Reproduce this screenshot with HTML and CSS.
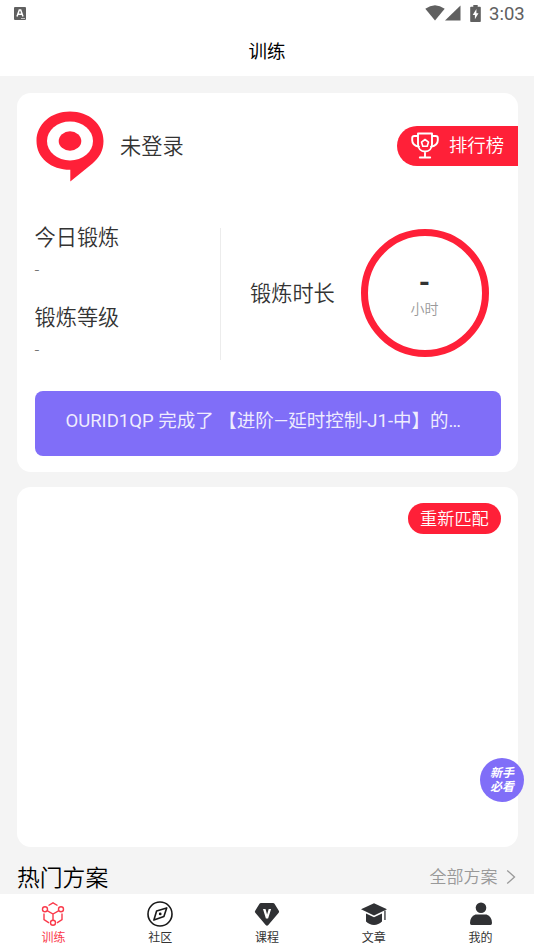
FILE: index.html
```html
<!DOCTYPE html>
<html lang="zh-CN">
<head>
<meta charset="utf-8">
<meta name="viewport" content="width=device-width">
<title>训练</title>
<link rel="stylesheet" href="styles.css">
</head>
<body>
<div class="app">
  <div class="status">
    <svg class="status-app" viewBox="0 0 12 13"><rect width="12" height="13" rx="1" fill="#606060"/><path d="M3 9.500 5.300 3h1.400L9 9.500M4 7.300h4" fill="none" stroke="#fff" stroke-width="1.500"/><path d="M7 11.500h4" stroke="#ddd" stroke-width=".8"/></svg>
    <div class="status-right">
      <svg width="20" height="16" viewBox="0 0 20 16"><path d="M.3 3.700Q10-3.400 19.700 3.700L10 15.500Z"/></svg>
      <svg width="16" height="16" viewBox="0 0 16 16"><path d="M15.500.5v15H0Z"/></svg>
      <svg class="battery" width="11" height="17" viewBox="0 0 11 17"><path d="M3.300 0h4.400v1.800H10q.8 0 .8.8v13.600q0 .8-.8.8H1q-.8 0-.8-.8V2.600q0-.8.8-.8h2.300Z"/><path d="M6.400 4 2.700 10h2.200v4.300L8.500 8.200H6.400Z" fill="#fff"/></svg>
      <span class="clock">3:03</span>
    </div>
  </div>
  <header class="title">训练</header>
  <main class="content">
    <section class="card summary">
      <div class="profile">
        <svg class="avatar" viewBox="0 0 68 71"><path d="M34 .5C53 .5 67.500 13 67.500 30c0 10-4.500 17-11 22.500L34.300 70.500V58.800C15 58.800.5 47 .5 30S15 .5 34 .5Z" fill="#ff2038"/><ellipse cx="34" cy="30" rx="23" ry="19.500" fill="#fff"/><ellipse cx="34" cy="30" rx="11.300" ry="9.700" fill="#ff2038"/></svg>
        <span class="name">未登录</span>
        <div class="rank">
          <svg width="28" height="27" viewBox="0 0 28 27" fill="none" stroke="#fff" stroke-width="1.900" stroke-linecap="round" stroke-linejoin="round"><path d="M7 1.500h14v10.500c0 4.500-2.800 7.500-7 7.500s-7-3-7-7.500ZM7 4H3.300Q1.200 4 1.200 6v2.300q0 5.200 6.800 6.500M21 4h3.700q2.100 0 2.100 2v2.300q0 5.200-6.800 6.500M14 20v5M8.800 25.500h10.400"/><path d="m14 7.500 3.500 2.600-1.300 4.200h-4.400l-1.300-4.200Z" stroke-width="1.600"/></svg>
          <span>排行榜</span>
        </div>
      </div>
      <div class="stats">
        <div class="stat-list">
          <div class="stat"><div class="stat-label">今日锻炼</div><div class="stat-value">-</div></div>
          <div class="stat"><div class="stat-label">锻炼等级</div><div class="stat-value">-</div></div>
        </div>
        <div class="duration">
          <span class="stat-label">锻炼时长</span>
          <div class="ring"><b>-</b><span>小时</span></div>
        </div>
      </div>
      <div class="notice">OURID1QP 完成了 【进阶—延时控制-J1-中】的…</div>
    </section>
    <section class="card match"><button class="rematch">重新匹配</button></section>
    <div class="section-head">
      <h2>热门方案</h2>
      <div class="more">全部方案<svg width="10" height="16" viewBox="0 0 10 16"><path d="m1.200 1.500 7.300 6.500-7.300 6.500" fill="none" stroke="#999" stroke-width="1.300"/></svg></div>
    </div>
  </main>
  <nav class="tabs">
    <div class="tab active">
      <svg width="26" height="26" viewBox="0 0 26 26" fill="none" stroke="#fa3a4b" stroke-width="1.400"><path d="m8.500 4.500 4.500-2.700 4.500 2.700M4 12.500v6l5 3.300M22 12.500v6l-5 3.300M7.500 9.800l5.500 3.200 5.500-3.200M13 13v6.500"/><circle cx="5" cy="8.300" r="2.500"/><circle cx="21" cy="8.300" r="2.500"/><circle cx="13" cy="21.800" r="2.500"/></svg>
      <span>训练</span>
    </div>
    <div class="tab">
      <svg width="26" height="26" viewBox="0 0 26 26" fill="none" stroke="#191919" stroke-width="1.600"><circle cx="13" cy="13" r="12"/><path d="m19.700 6.900-2.800 8.700-10 3.500 2.700-9.200Z" stroke-linejoin="round"/><circle cx="13.200" cy="12.900" r="1.400" fill="#191919" stroke="none"/></svg>
      <span>社区</span>
    </div>
    <div class="tab">
      <svg width="26" height="26" viewBox="0 0 26 26"><path d="M7 2h12q1 0 1.500.8l4.300 7q.7 1-.1 1.900L14.300 24q-1.300 1.300-2.600 0L1.300 11.700q-.8-.9-.1-1.900l4.300-7Q6 2 7 2Z" fill="#303134"/><path d="M9 8h2.500l1.600 5.500L14.700 8h2.400l-3 9.500h-2.200Z" fill="#fff"/></svg>
      <span>课程</span>
    </div>
    <div class="tab">
      <svg width="28" height="26" viewBox="0 0 28 26" fill="#303134"><path d="M14 2.200 27 8.300 14 14.500 1 8.300Z"/><path d="M6 12.600 14 16.300l8-3.700v8Q18.500 24 14 24T6 20.600Z"/><path d="M24.300 9.500h1.300V19h-1.300Z"/></svg>
      <span>文章</span>
    </div>
    <div class="tab">
      <svg width="26" height="26" viewBox="0 0 26 26" fill="#303134"><circle cx="13" cy="6.700" r="5.300"/><path d="M7.500 13.500h11q5.500 2 5.500 8.500 0 2-1.500 2H3.500Q2 24 2 22q0-6.500 5.500-8.500Z"/></svg>
      <span>我的</span>
    </div>
  </nav>
  <div class="guide"><span>新手</span><span>必看</span></div>
</div>
</body>
</html>
```
FILE: styles.css
```css
* { box-sizing: border-box; }
body {
  margin: 0;
  background: #f4f4f4;
  font-family: Roboto, "Noto Sans CJK SC", sans-serif;
  font-weight: 350;
  color: #333;
}
svg { display: block; flex: none; }
.app {
  position: relative;
  display: flex;
  flex-direction: column;
  width: 534px;
  height: 950px;
  overflow: hidden;
}
.status {
  display: flex;
  justify-content: space-between;
  align-items: center;
  height: 28px;
  padding: 0 10px 2px 14px;
  background: #fff;
}
.status-app { width: 12px; height: 13px; }
.status-right { display: flex; align-items: center; height: 26px; fill: #606060; }
.battery { margin: 0 8px 0 9px; }
.clock { font-size: 18.500px; font-weight: 400; line-height: 26px; color: #606060; width: 35px; white-space: nowrap; padding-top: 2px; }
.title {
  height: 48px;
  background: #fff;
  color: #000;
  text-align: center;
  font-size: 18.500px;
  font-weight: 400;
  line-height: 48px;
}
.content { flex: 1; min-height: 0; padding: 16.500px 15.600px 0 16.500px; }
.card { background: #fff; border-radius: 14px; }
.summary { height: 379.500px; padding: 18px 0 0 18px; }
.profile { display: flex; height: 72px; }
.avatar { width: 68px; height: 71px; margin-left: 1.500px; }
.name { margin-left: 16px; font-size: 21.200px; line-height: 71px; }
.rank {
  display: flex;
  align-items: center;
  width: 121px;
  height: 40px;
  margin: 15px 0 0 auto;
  padding-left: 14px;
  gap: 9.500px;
  border-radius: 20px 0 0 20px;
  background: #ff2038;
  color: #fff;
  font-size: 18.400px;
  line-height: 38px;
}
.stats { display: flex; margin-top: 45px; height: 132px; }
.stat-list { width: 186px; border-right: 1px solid #ececec; }
.stat { height: 80.500px; }
.stat-label { font-size: 21.200px; line-height: 20px; white-space: nowrap; }
.stat-value { margin-top: 12px; font-size: 17px; line-height: 20px; color: #666; }
.duration { display: flex; flex: 1; align-items: center; justify-content: space-between; padding: 0 29.900px 0 29.500px; }
.ring {
  display: flex;
  flex-direction: column;
  align-items: center;
  width: 128px;
  height: 128px;
  margin-top: -1px;
  padding-top: 30px;
  border: 7px solid #ff2038;
  border-radius: 50%;
}
.ring b { font-size: 29px; line-height: 32px; font-weight: 700; }
.ring span { font-size: 14px; line-height: 22px; color: #999; }
.notice {
  height: 65px;
  margin: 31px 17.500px 0 0;
  padding-left: 31px;
  border-radius: 8px;
  background: #806ef8;
  color: rgba(255, 255, 255, .88);
  font-size: 18.500px;
  font-weight: 400;
  line-height: 60px;
  white-space: nowrap;
}
.match { display: flex; justify-content: flex-end; height: 360px; margin-top: 15px; padding: 16px 17.500px; }
.rematch {
  width: 93px;
  height: 31px;
  padding: 0;
  border: 0;
  border-radius: 16px;
  background: #ff2038;
  color: #fff;
  font: inherit;
  font-size: 17.200px;
  line-height: 32px;
}
.section-head { display: flex; justify-content: space-between; align-items: center; height: 58px; padding-right: 2px; }
.section-head h2 { margin: 5px 0 0 .5px; font-size: 22.800px; font-weight: 350; line-height: 30px; color: #000; }
.more { display: flex; align-items: center; gap: 9px; font-size: 17px; line-height: 30px; color: #999; padding-top: 1px; }
.tabs { position: relative; display: flex; flex: none; height: 56px; background: #fff; }
.tab { display: flex; flex: 1; flex-direction: column; align-items: center; padding-top: 6.500px; font-size: 12px; line-height: 22px; font-weight: 400; }
.tab.active { color: #fa3a4b; }
.guide {
  position: absolute;
  left: 480px;
  top: 758px;
  display: flex;
  flex-direction: column;
  align-items: center;
  justify-content: center;
  width: 44px;
  height: 44px;
  border-radius: 50%;
  background: #806ef8;
  color: #fff;
  font-size: 12px;
  font-weight: 700;
  font-style: italic;
  line-height: 14px;
}
```
